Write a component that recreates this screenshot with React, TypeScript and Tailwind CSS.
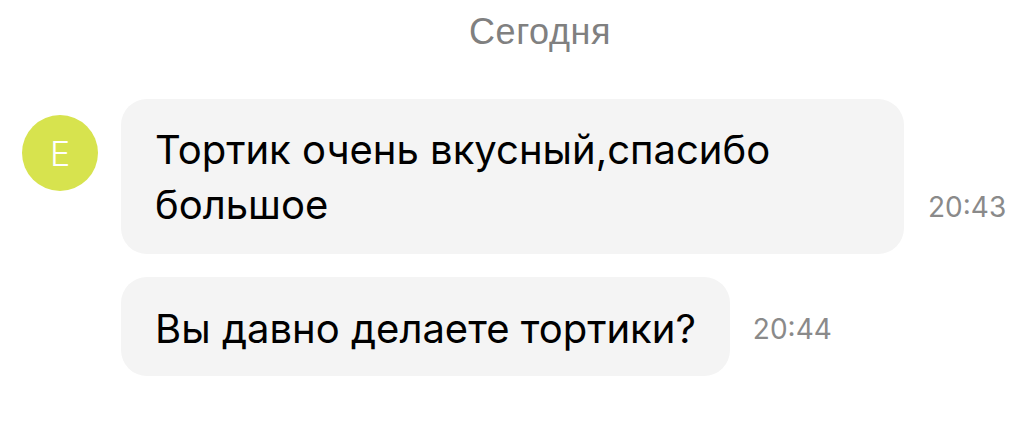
export default function App() {
  return (
    <div className="w-[1028px] h-[434px] bg-white font-['Inter','Roboto',sans-serif] overflow-hidden">
      <div className="pt-[12px] pl-[52px] text-center font-['Liberation_Sans',Arial,sans-serif] text-[36px] leading-[40px] tracking-[0.6px] text-[#808080]">
        Сегодня
      </div>
      <div className="mt-[47px] pl-[22px] flex flex-col gap-[23px]">
        <div className="flex items-start">
          <div className="mt-[16px] w-[76px] h-[76px] rounded-full bg-[#d7e34e] flex items-center justify-center text-white text-[34px] font-light shrink-0">
            E
          </div>
          <div className="ml-[23px] flex items-end">
            <div className="w-[783px] rounded-[26px] bg-[#f4f4f4] pl-[34px] pr-[20px] pt-[23px] pb-[22px] text-[40px] leading-[55px] text-black">
              Тортик очень вкусный,спасибо большое
            </div>
            <div className="ml-[24px] mb-[30px] text-[28px] leading-[34px] text-[#8a8a8a]">20:43</div>
          </div>
        </div>
        <div className="flex items-start">
          <div className="w-[76px] shrink-0" />
          <div className="ml-[23px] flex items-end">
            <div className="rounded-[26px] bg-[#f4f4f4] px-[34px] pt-[24px] pb-[20px] text-[40px] leading-[55px] text-black">
              Вы давно делаете тортики?
            </div>
            <div className="ml-[23px] mb-[30px] text-[28px] leading-[34px] text-[#8a8a8a]">20:44</div>
          </div>
        </div>
      </div>
    </div>
  );
}
